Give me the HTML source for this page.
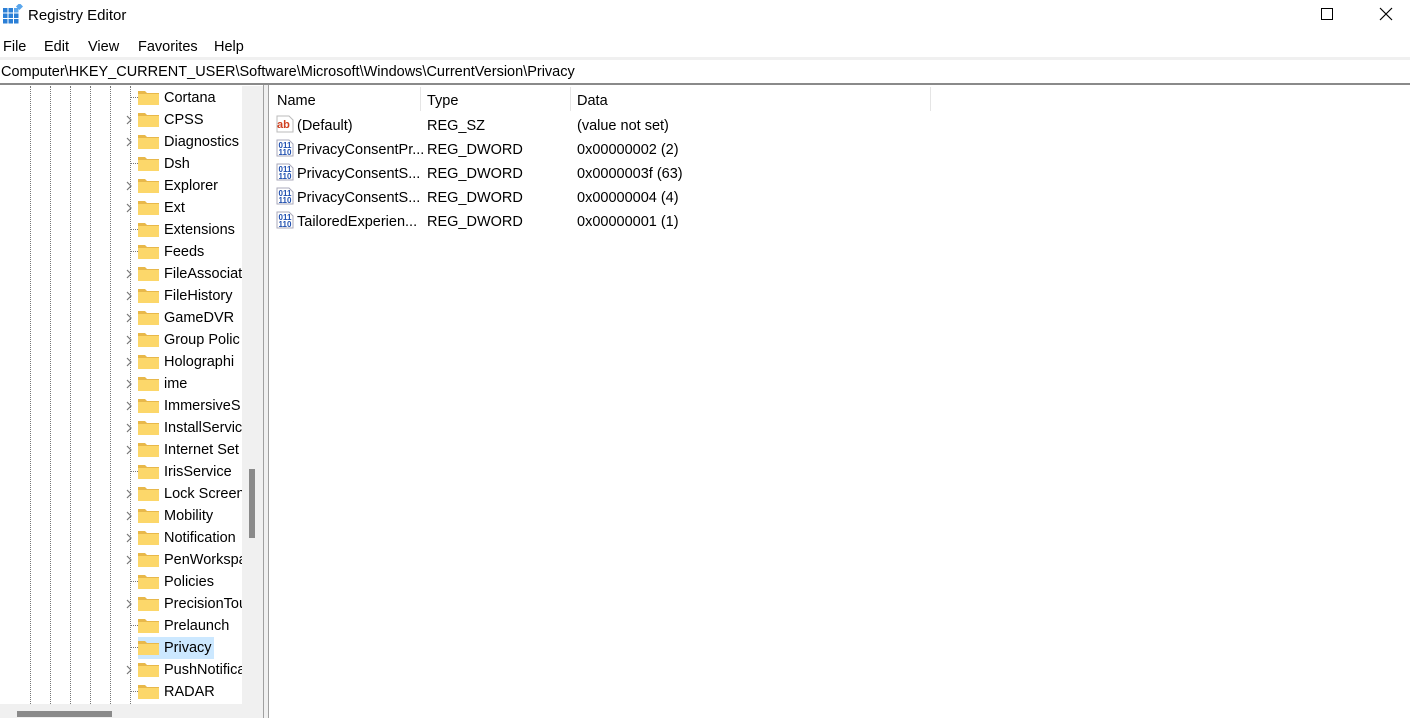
<!DOCTYPE html>
<html><head><meta charset="utf-8"><style>
*{margin:0;padding:0;box-sizing:border-box}
body{width:1410px;height:718px;overflow:hidden;background:#fff;font-family:"Liberation Sans",sans-serif;font-size:14.5px;color:#000;position:relative}
.a{position:absolute;white-space:nowrap}
.vl{position:absolute;top:86px;height:618px;width:1px;border-left:1px dotted #777}
</style></head><body>
<svg class="a" style="left:3px;top:4px" width="20" height="20" viewBox="0 0 20 20">
<g fill="#2b7fd6"><rect x="0" y="4" width="4.5" height="4.5"/><rect x="5.5" y="4" width="4.5" height="4.5"/><rect x="11" y="4" width="4.5" height="4.5" fill="#5aa6ec"/>
<rect x="0" y="9.5" width="4.5" height="4.5"/><rect x="5.5" y="9.5" width="4.5" height="4.5"/><rect x="11" y="9.5" width="4.5" height="4.5"/>
<rect x="0" y="15" width="4.5" height="4.5"/><rect x="5.5" y="15" width="4.5" height="4.5"/><rect x="11" y="15" width="4.5" height="4.5"/></g>
<rect x="14" y="0" width="5" height="5" fill="#5aa6ec" transform="rotate(45 16.5 2.5)"/></svg>
<div class="a" style="left:28px;top:7px;font-size:15px">Registry Editor</div>
<div class="a" style="left:1321px;top:8px;width:12px;height:12px;border:1px solid #000"></div>
<svg class="a" style="left:1379px;top:7px" width="14" height="14"><path d="M1 1L13 13M13 1L1 13" stroke="#000" stroke-width="1.2"/></svg>
<div class="a" style="left:3px;top:39px">File</div>
<div class="a" style="left:44px;top:39px">Edit</div>
<div class="a" style="left:88px;top:39px">View</div>
<div class="a" style="left:138px;top:39px">Favorites</div>
<div class="a" style="left:214px;top:39px">Help</div>
<div class="a" style="left:0;top:57px;width:1410px;height:3px;background:#f0f0f0"></div>
<div class="a" style="left:1px;top:64px">Computer\HKEY_CURRENT_USER\Software\Microsoft\Windows\CurrentVersion\Privacy</div>
<div class="a" style="left:0;top:83px;width:1410px;height:2px;background:#8a8a8a"></div>
<div class="vl" style="left:30px"></div><div class="vl" style="left:50px"></div><div class="vl" style="left:70px"></div><div class="vl" style="left:90px"></div><div class="vl" style="left:110px"></div><div class="vl" style="left:130px"></div>
<div class="a" style="left:138px;top:637px;width:76px;height:22px;background:#cce8ff"></div>
<div id="tree"></div>
<div class="a" style="left:242px;top:86px;width:21px;height:618px;background:#f0f0f0"></div>
<div class="a" style="left:249px;top:469px;width:6px;height:69px;background:#8a8a8a"></div>
<div class="a" style="left:0;top:704px;width:263px;height:14px;background:#f0f0f0"></div>
<div class="a" style="left:17px;top:711px;width:95px;height:6px;background:#8a8a8a"></div>
<div class="a" style="left:263px;top:85px;width:1px;height:633px;background:#a0a0a0"></div>
<div class="a" style="left:264px;top:85px;width:4px;height:633px;background:#f0f0f0"></div>
<div class="a" style="left:268px;top:85px;width:1px;height:633px;background:#a0a0a0"></div>
<div class="a" style="left:277px;top:93px">Name</div>
<div class="a" style="left:420px;top:87px;width:1px;height:24px;background:#e5e5e5"></div>
<div class="a" style="left:427px;top:93px">Type</div>
<div class="a" style="left:570px;top:87px;width:1px;height:24px;background:#e5e5e5"></div>
<div class="a" style="left:577px;top:93px">Data</div>
<div class="a" style="left:930px;top:87px;width:1px;height:24px;background:#e5e5e5"></div>
<div id="list"></div>
<script>
var names=[["Cortana",0],["CPSS",1],["Diagnostics",1],["Dsh",0],["Explorer",1],["Ext",1],["Extensions",0],["Feeds",0],["FileAssociat",1],["FileHistory",1],["GameDVR",1],["Group Polic",1],["Holographi",1],["ime",1],["ImmersiveS",1],["InstallServic",1],["Internet Set",1],["IrisService",0],["Lock Screen",1],["Mobility",1],["Notification",1],["PenWorkspa",1],["Policies",0],["PrecisionTou",1],["Prelaunch",0],["Privacy",0],["PushNotifica",1],["RADAR",0]];
var h="";
names.forEach(function(n,i){var y=86+i*22;
if(n[1])h+='<svg class="a" style="left:125px;top:'+(y+7)+'px;display:block" width="8" height="10"><path d="M2 1L6 5L2 9" fill="none" stroke="#777" stroke-width="1.2"/></svg>';
else h+='<div class="a" style="left:131px;top:'+(y+11)+'px;width:7px;border-top:1px dotted #777"></div>';
h+='<svg class="a" style="left:138px;top:'+(y+4)+'px;display:block" width="21" height="15"><path d="M0 1h7l2 2h12v12H0z" fill="#e8b84a"/><rect x="0" y="4" width="21" height="11" fill="#fcd76a"/></svg>';
h+='<div class="a" style="left:164px;top:'+(y+4)+'px;width:78px;overflow:hidden">'+n[0]+'</div>';});
document.getElementById("tree").innerHTML=h;
var rows=[["(Default)","REG_SZ","(value not set)",1],["PrivacyConsentPr...","REG_DWORD","0x00000002 (2)"],["PrivacyConsentS...","REG_DWORD","0x0000003f (63)"],["PrivacyConsentS...","REG_DWORD","0x00000004 (4)"],["TailoredExperien...","REG_DWORD","0x00000001 (1)"]];
h="";
rows.forEach(function(r,i){var y=114+i*24;
if(r[3])h+='<svg class="a" style="left:276px;top:'+(y+1)+'px" width="19" height="18"><path d="M1 1h12l4 4v12H1z" fill="#fff" stroke="#bbb"/><text x="1" y="13" font-family="Liberation Sans" font-weight="bold" font-size="11" fill="#d04020">ab</text></svg>';
else h+='<svg class="a" style="left:276px;top:'+(y+1)+'px" width="19" height="18"><path d="M1 1h12l4 4v12H1z" fill="#fff" stroke="#aab"/><text x="2.5" y="9" font-family="Liberation Sans" font-weight="bold" font-size="8" fill="#2050b0">011</text><text x="2.5" y="16" font-family="Liberation Sans" font-weight="bold" font-size="8" fill="#2050b0">110</text></svg>';
h+='<div class="a" style="left:297px;top:'+(y+4)+'px">'+r[0]+'</div><div class="a" style="left:427px;top:'+(y+4)+'px">'+r[1]+'</div><div class="a" style="left:577px;top:'+(y+4)+'px">'+r[2]+'</div>';});
document.getElementById("list").innerHTML=h;
</script>
</body></html>
